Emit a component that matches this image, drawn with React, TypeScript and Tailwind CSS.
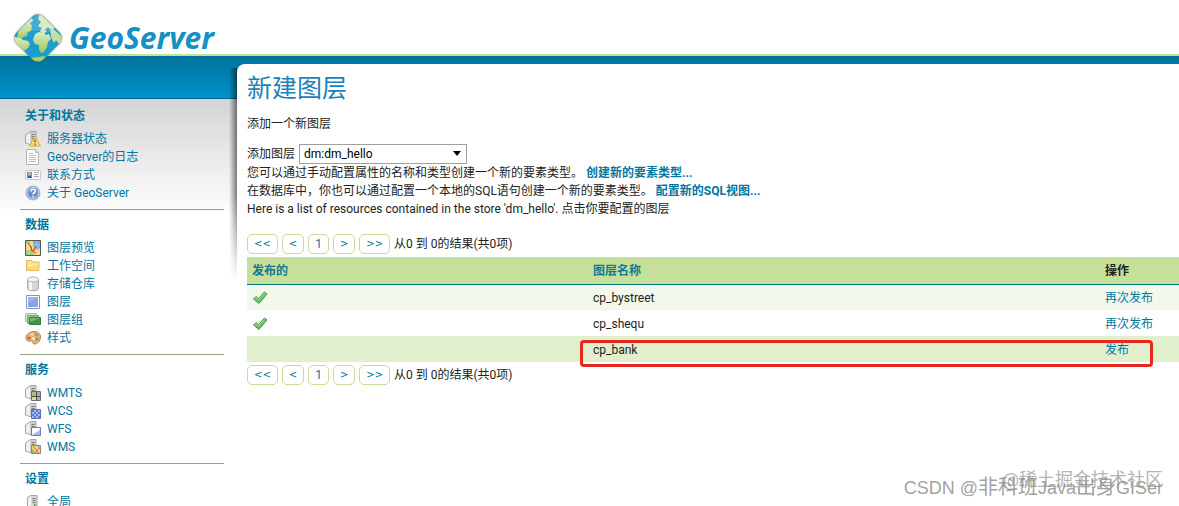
import { type ReactNode } from 'react';

type MenuItem = { label: string; icon: ReactNode };
type MenuSection = { title: string; items: MenuItem[] };

const Icon = ({ children }: { children: ReactNode }) => (
  <svg viewBox="0 0 16 16" className="h-4 w-4 shrink-0" aria-hidden="true">
    {children}
  </svg>
);

const ServerShape = () => (
  <>
    <path d="M.5 4 4 1.500 6 .5h5v12l-1 1H5L.5 12z" fill="#cfcfcf" stroke="#a4a4a4" />
    <path d="M1 4.500 5 1.500v11.500L1 11.500z" fill="#f0f0f0" />
    <path d="M6.500 3.500h3M6.500 5.500h3M6.500 7.500h3" stroke="#777" />
  </>
);

const StatusIcon = () => (
  <Icon>
    <ServerShape />
    <path d="M10 5.500 15.500 15h-11z" fill="#ffe07a" stroke="#d9a93a" strokeLinejoin="round" />
    <path d="M10 8.500v3M10 12.500v1.500" stroke="#6e5a10" strokeWidth="1.300" />
  </Icon>
);

const LogsIcon = () => (
  <Icon>
    <path d="M1.500.5h9l3 3v12h-12z" fill="#fbfbfb" stroke="#b5b5b5" />
    <path d="M10.500.5v3h3" fill="#e4e4e4" stroke="#b5b5b5" />
    <path d="M4 4.500h4M4 6.500h7M4 8.500h7M4 10.500h7M4 12.500h7" stroke="#c0c0c0" />
  </Icon>
);

const ContactIcon = () => (
  <Icon>
    <path d="M.5 3.500h15v9H.5z" fill="#f8fafc" stroke="#c3cad2" />
    <path d="M2 5h5v6H2z" fill="#5b93cf" />
    <circle cx="4.500" cy="7" r="1.400" fill="#f0c090" />
    <path d="M2.500 11c0-3 4-3 4 0z" fill="#2f5f96" />
    <path d="M9 5.500h2M12 5.500h2M9 7.500h4M9 9.500h5" stroke="#9aa6b4" />
  </Icon>
);

const AboutIcon = () => (
  <Icon>
    <circle cx="8" cy="8" r="7" fill="#8fabd8" stroke="#a5b5d4" />
    <circle cx="8" cy="8" r="5.500" fill="#6a8cc8" stroke="#d4dff2" strokeWidth=".8" />
    <path d="M6 6.500c0-3 4.200-2.800 4.200-.3 0 1.600-2.200 1.500-2.200 3.300M8 10.700v1.600" fill="none" stroke="#fff" strokeWidth="1.600" />
  </Icon>
);

const PreviewIcon = () => (
  <Icon>
    <path d="M.5.5h15v15H.5z" fill="#f0dc78" stroke="#555" />
    <path d="M8 1h7v7l-3 2-4-4z" fill="#78aee0" />
    <path d="M1 10h5l3 5H1zM1 1h4v3H1z" fill="#9ccb78" />
    <path d="M3 3l3 4 1 4 4 2M11 6l-3 6" fill="none" stroke="#d8442f" strokeWidth="1.300" />
    <path d="M4 1v14M12 1v14M1 5h14M1 12h14" stroke="#fff" strokeOpacity=".45" strokeWidth=".6" />
  </Icon>
);

const FolderIcon = () => (
  <Icon>
    <path d="M1.500 12.500v-10h5l1 1.500h6.500v8.500z" fill="#fbe08a" stroke="#e8b75a" />
    <path d="M2 7h5l1-1.500h5.500V12H2z" fill="#fdd680" />
    <path d="M3 7.500h4.500l1-1.500H13" fill="none" stroke="#fff6d4" />
  </Icon>
);

const StoreIcon = () => (
  <Icon>
    <path d="M2.500 3.500v9c0 3 11 3 11 0v-9z" fill="#d6d6d6" stroke="#a9a9a9" />
    <path d="M4 5v8.500l3 .9V5z" fill="#f7f7f7" />
    <ellipse cx="8" cy="3.500" rx="5.500" ry="2.500" fill="#f3f3f3" stroke="#b4b4b4" />
  </Icon>
);

const LayerIcon = () => (
  <Icon>
    <path d="M1.500 1.500h13v13h-13z" fill="#fff" stroke="#8295c4" />
    <path d="M3 3h10v10H3z" fill="#86a5dc" />
    <path d="M3 3h10L3 9z" fill="#9bb6e4" />
  </Icon>
);

const GroupIcon = () => (
  <Icon>
    <path d="M.5 1.500h11v8H.5z" fill="#d7edd7" stroke="#9cc99c" />
    <path d="M2.500 3.500h11v8h-11z" fill="#92c792" stroke="#6dab6d" />
    <path d="M4.500 5.500h11v7h-11z" fill="#43914a" stroke="#3b7c44" />
    <path d="M5 6h10l-10 4z" fill="#75b677" />
  </Icon>
);

const StyleIcon = () => (
  <Icon>
    <path d="M8.500 1.500c4-.3 7 2 7 5.500 0 4-3 7-6 7-2.500 0-1-2.500-3-3-1.500-.4-3 1-4.500-.5C-1 7 3 2 8.500 1.500z" fill="#e8b07a" stroke="#c08048" />
    <circle cx="4" cy="8" r="1.500" fill="#e0503c" />
    <circle cx="7" cy="4.500" r="1.500" fill="#f5e27a" />
    <circle cx="11.500" cy="4.800" r="1.600" fill="#6ca0dc" />
    <circle cx="12" cy="9" r="1.600" fill="#5cae5c" />
    <circle cx="8.500" cy="8.500" r="1.200" fill="#fff3e2" />
  </Icon>
);

const WmtsIcon = () => (
  <Icon>
    <ServerShape />
    <path d="M6.500 6.500h9v9h-9z" fill="#efd784" stroke="#6b6b78" />
    <path d="M7 7h4v4H7z" fill="#9cc384" />
    <path d="M12 7h3v4h-3z" fill="#e49484" />
    <path d="M12 12h3v3h-3z" fill="#92b8da" />
    <path d="M11.500 7v8M7 11.500h8" stroke="#4d4d4d" />
  </Icon>
);

const WcsIcon = () => (
  <Icon>
    <ServerShape />
    <path d="M6.500 6.500h9v9h-9z" fill="#a6baf0" stroke="#5a72bc" />
    <path d="M7 7h2v2H7zM11 7h2v2h-2zM9 9h2v2H9zM13 9h2v2h-2zM7 11h2v2H7zM11 11h2v2h-2zM9 13h2v2H9zM13 13h2v2h-2z" fill="#5f7ccc" />
  </Icon>
);

const WfsIcon = () => (
  <Icon>
    <ServerShape />
    <path d="M6.500 6.500h9v8h-9z" fill="#fff" stroke="#6a7cc0" />
    <path d="M15 8v6H8c1-3 5-2 7-6z" fill="#a9baea" />
  </Icon>
);

const WmsIcon = () => (
  <Icon>
    <ServerShape />
    <path d="M6.500 6.500h9v8h-9z" fill="#f0d878" stroke="#8a8a78" />
    <path d="M12 7h3v4z" fill="#80b0dc" />
    <path d="M7 10l5 4H7z" fill="#8cc070" />
    <path d="M8 8l3 2 1 3 2 1M14 9l-3 4" fill="none" stroke="#de6a54" />
  </Icon>
);

const GlobalIcon = () => (
  <Icon>
    <path d="M2.500 3.500 6 1.500h6v12l-1.500 2H6l-3.500-2z" fill="#d8d8d8" stroke="#a2a2a2" />
    <path d="M3 4l3-2v13l-3-1.500z" fill="#f2f2f2" />
    <path d="M7.500 4.500H10.500M7.500 6.500H10.500M7.500 8.500H10.500" stroke="#777" />
    <path d="M9 10h1.500v2H9z" fill="#4fa34f" />
  </Icon>
);

const TickIcon = () => (
  <Icon>
    <path d="M1.500 9 4 6.500l2.500 2L12.500 2 15 4 7 13.500z" fill="#6cc065" stroke="#4f974d" strokeLinejoin="round" />
    <path d="M3 8.800 4.200 7.800l2.400 2L12.700 3.300" fill="none" stroke="#a5dd9c" />
  </Icon>
);

const Globe = () => (
  <svg viewBox="0 0 50 52" className="h-[52px] w-[50px]" aria-hidden="true">
    <defs>
      <clipPath id="gem">
        <rect x="6" y="7" width="38" height="38" rx="8" transform="rotate(45 25 26)" />
      </clipPath>
      <linearGradient id="land" x1="0" y1="0" x2="0" y2="1">
        <stop offset="0" stopColor="#dcebc4" />
        <stop offset="1" stopColor="#9ccb52" />
      </linearGradient>
      <filter id="soft" x="-20%" y="-20%" width="140%" height="140%">
        <feGaussianBlur stdDeviation="1" />
      </filter>
    </defs>
    <rect x="6" y="7" width="38" height="38" rx="8" transform="rotate(45 25 26)" fill="#555" opacity=".75" filter="url(#soft)" />
    <g clipPath="url(#gem)">
      <path d="M0 0h50v52H0z" fill="#1c9dcd" />
      <path d="M19 6l1 3-3 2 2 3-1 5-3 1-1 4-4 1-2 3-4-2 2-9z" fill="url(#land)" />
      <path d="M1 25l6 1 3 2 5 1 2 3-2 4-4 3-1 4L0 32z" fill="url(#land)" />
      <path d="M27 1l7 7 8 8-4 2-3-3-3 3 2 2-5 2-2-3 2-3-4-2 3-4-3-3z" fill="#d4e8bc" />
      <path d="M22 22l4-2 5 1 2 2 3-1 2 5-3 3-1 5-3 5-3 1-2-4v-4l-4-1-2-4z" fill="url(#land)" />
      <path d="M37 15l7 5 6 6-4 6-3-4-2 3-3-6z" fill="#c2dfa0" />
      <path d="M17 46l8-1 8-1-6 8h-5z" fill="#a7d160" />
      <path d="M4 23 22 4q3-2 6 0l18 19q-21-9-42 0z" fill="#fff" opacity=".16" />
    </g>
  </svg>
);

const sections: MenuSection[] = [
  {
    title: '关于和状态',
    items: [
      { label: '服务器状态', icon: <StatusIcon /> },
      { label: 'GeoServer的日志', icon: <LogsIcon /> },
      { label: '联系方式', icon: <ContactIcon /> },
      { label: '关于 GeoServer', icon: <AboutIcon /> },
    ],
  },
  {
    title: '数据',
    items: [
      { label: '图层预览', icon: <PreviewIcon /> },
      { label: '工作空间', icon: <FolderIcon /> },
      { label: '存储仓库', icon: <StoreIcon /> },
      { label: '图层', icon: <LayerIcon /> },
      { label: '图层组', icon: <GroupIcon /> },
      { label: '样式', icon: <StyleIcon /> },
    ],
  },
  {
    title: '服务',
    items: [
      { label: 'WMTS', icon: <WmtsIcon /> },
      { label: 'WCS', icon: <WcsIcon /> },
      { label: 'WFS', icon: <WfsIcon /> },
      { label: 'WMS', icon: <WmsIcon /> },
    ],
  },
  { title: '设置', items: [{ label: '全局', icon: <GlobalIcon /> }] },
];

const layers = [
  { name: 'cp_bystreet', published: true, action: '再次发布', row: 'bg-[#f3f8ec]' },
  { name: 'cp_shequ', published: true, action: '再次发布', row: 'bg-white' },
  { name: 'cp_bank', published: false, action: '发布', row: 'bg-[#e2efcd]' },
];

function Pager() {
  return (
    <nav className="flex h-5 items-center gap-1">
      {['<<', '<', '1', '>', '>>'].map((label) => (
        <a
          key={label}
          href="#"
          className="flex h-5 items-center rounded-[5px] border border-[#c5dd9b] px-[6px] text-[#0076a1]"
        >
          {label === '1' ? label : <span className="font-['DejaVu_Sans'] text-[10px]">{label}</span>}
        </a>
      ))}
      <span>从0 到 0的结果(共0项)</span>
    </nav>
  );
}

function Sidebar() {
  return (
    <aside className="w-[237px] shrink-0 pt-[45px] pr-[13px] pl-5 text-[#0076a1]">
      {sections.map(({ title, items }) => (
        <section key={title} className="border-b border-[#9b9f83] pt-[6px] pb-[7px] pl-[5px]">
          <h2 className="mb-[5px] font-bold">{title}</h2>
          <ul>
            {items.map(({ label, icon }) => (
              <li key={label}>
                <a href="#" className="flex h-[18px] items-center gap-[6px]">
                  {icon}
                  {label}
                </a>
              </li>
            ))}
          </ul>
        </section>
      ))}
    </aside>
  );
}

export default function App() {
  return (
    <div className="relative flex h-screen flex-col overflow-hidden bg-white font-['Roboto','Noto_Sans_CJK_SC',sans-serif] text-[12px] leading-[18px] text-[#222]">
      <header className="h-14 shrink-0 border-b-2 border-[#c0e29a]">
        <a href="#" className="relative z-10 flex items-start gap-[6px] pt-3 pl-[13px]">
          <Globe />
          <span className="pt-[6px] font-['Noto_Sans'] text-[30px] leading-10 font-bold text-[#1490c4] italic">
            GeoServer
          </span>
        </a>
      </header>

      <div className="flex grow bg-[linear-gradient(#00739c_0px,#0092ca_42px,#00668c_42px,#00668c_43px,#d4d4d4_43px,#fff_160px)]">
        <Sidebar />

        <div className="min-w-0 grow bg-[linear-gradient(#00739c,#007aa5)] bg-[length:100%_8px] bg-no-repeat pt-2">
          <main className="relative h-full rounded-tl-[8px] bg-white pt-[9px] pl-[10px]">
            <div className="absolute top-1 -left-2 h-[212px] w-2 bg-linear-to-l from-black/50 to-transparent mask-b-from-60%" />

            <h1 className="text-[25px] leading-8 text-[#1c82b8]">新建图层</h1>
            <p className="mt-[10px]">添加一个新图层</p>

            <div className="mt-[11px] flex h-5 items-center gap-1">
              <label htmlFor="store">添加图层</label>
              <div className="relative">
                <select
                  id="store"
                  className="block h-5 w-[168px] appearance-none border border-[#a0a0a0] bg-white pl-1 text-[12px] leading-[18px] text-black"
                >
                  <option>dm:dm_hello</option>
                </select>
                <svg viewBox="0 0 8 5" className="pointer-events-none absolute top-[7px] right-[6px] h-[5px] w-2">
                  <path d="M0 0h8L4 5z" fill="#000" />
                </svg>
              </div>
            </div>

            <p className="whitespace-nowrap">
              您可以通过手动配置属性的名称和类型创建一个新的要素类型。{' '}
              <a href="#" className="font-bold text-[#0076a1]">
                创建新的要素类型...
              </a>
            </p>
            <p className="whitespace-nowrap">
              在数据库中，你也可以通过配置一个本地的SQL语句创建一个新的要素类型。{' '}
              <a href="#" className="font-bold text-[#0076a1]">
                配置新的SQL视图...
              </a>
            </p>
            <p className="mb-4">Here is a list of resources contained in the store 'dm_hello'. 点击你要配置的图层</p>

            <Pager />

            <div className="relative my-[3px]">
              <table className="w-full table-fixed border-collapse text-left">
                <thead className="bg-[#c6e09a]">
                  <tr className="h-[27px] border-b border-[#00767a]">
                    <th className="w-[341px] px-[5px] pt-[2px]">
                      <a href="#" className="text-[#0f7a94]">
                        发布的
                      </a>
                    </th>
                    <th className="px-[5px] pt-[2px]">
                      <a href="#" className="text-[#0f7a94]">
                        图层名称
                      </a>
                    </th>
                    <th className="w-[79px] px-[5px] pt-[2px]">操作</th>
                  </tr>
                </thead>
                <tbody>
                  {layers.map(({ name, published, action, row }) => (
                    <tr key={name} className={`h-[26px] ${row}`}>
                      <td className="px-[5px] pt-[2px]">{published ? <TickIcon /> : null}</td>
                      <td className="px-[5px] pt-[2px]">{name}</td>
                      <td className="px-[5px] pt-[2px]">
                        <a href="#" className="text-[#0076a1]">
                          {action}
                        </a>
                      </td>
                    </tr>
                  ))}
                </tbody>
              </table>
              <div className="pointer-events-none absolute right-[26px] -bottom-[5px] left-[333px] h-[27px] rounded-[4px] border-3 border-[#e6291c]" />
            </div>

            <Pager />
          </main>
        </div>
      </div>

      <div className="pointer-events-none absolute right-4 bottom-[14px] text-[18px] leading-6 text-[#b4b4b4]">
        @稀土掘金技术社区
      </div>
      <div className="pointer-events-none absolute right-4 bottom-[6px] font-['Liberation_Sans','Noto_Sans_CJK_SC',sans-serif] text-[18px] leading-6 text-[#888]/80">
        CSDN @<span className="text-[20px]">非科班</span>Java<span className="text-[20px]">出身</span>GISer
      </div>
    </div>
  );
}
